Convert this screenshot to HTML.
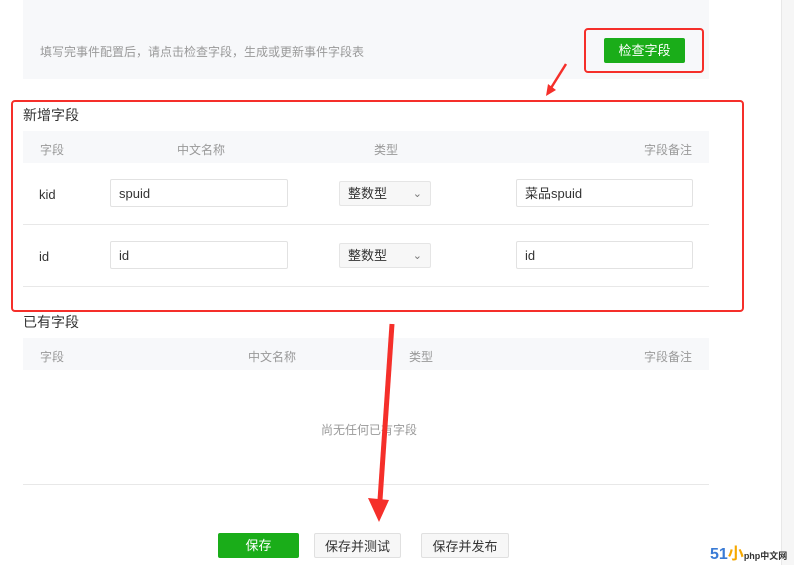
<!DOCTYPE html><html><head><meta charset="utf-8"><style>
body{margin:0;width:794px;height:565px;background:#fff;position:relative;overflow:hidden;font-family:"Liberation Sans","Noto Sans CJK SC",sans-serif;}
.a{position:absolute;white-space:nowrap}
.g{color:#999;font-size:12px}
.in{position:absolute;border:1px solid #e2e2e2;border-radius:2px;background:#fff;font-size:13px;color:#333;box-sizing:border-box;padding-left:8px;line-height:28px}
.sel{position:absolute;border:1px solid #e5e5e5;background:#f7f7f7;font-size:13px;color:#333;box-sizing:border-box;padding-left:8px;line-height:24px;border-radius:2px}
.btn{position:absolute;box-sizing:border-box;font-size:13px;text-align:center;line-height:25px;border-radius:2px}
</style></head><body>
<div class="a" style="left:781px;top:0;width:13px;height:565px;background:#f6f6f6;border-left:1px solid #e8e8e8"></div>
<div class="a" style="left:23px;top:0;width:686px;height:79px;background:#f7f8fa"></div>
<div class="a g" style="left:40px;top:43px">填写完事件配置后，请点击检查字段，生成或更新事件字段表</div>
<div class="btn" style="left:604px;top:38px;width:81px;height:25px;background:#1aad19;color:#fff">检查字段</div>
<div class="a" style="left:584px;top:28px;width:116px;height:41px;border:2px solid #f52f2a;border-radius:4px"></div>
<div class="a" style="left:11px;top:100px;width:729px;height:208px;border:2px solid #f52f2a;border-radius:4px"></div>
<div class="a" style="left:23px;top:105px;font-size:14px;color:#333">新增字段</div>
<div class="a" style="left:23px;top:131px;width:686px;height:32px;background:#f7f8fa"></div>
<div class="a g" style="left:40px;top:141px">字段</div><div class="a g" style="left:177px;top:141px">中文名称</div><div class="a g" style="left:374px;top:141px">类型</div><div class="a g" style="left:644px;top:141px">字段备注</div>
<div class="a" style="left:23px;top:224px;width:686px;height:1px;background:#e8e8e8"></div>
<div class="a" style="left:23px;top:286px;width:686px;height:1px;background:#e8e8e8"></div>
<div class="a" style="left:39px;top:187px;font-size:13px;color:#333">kid</div>
<div class="in" style="left:110px;top:179px;width:178px;height:28px">spuid</div>
<div class="sel" style="left:339px;top:181px;width:92px;height:25px">整数型<span style="position:absolute;right:8px;color:#777;font-size:11px">⌄</span></div>
<div class="in" style="left:516px;top:179px;width:177px;height:28px">菜品spuid</div>
<div class="a" style="left:39px;top:249px;font-size:13px;color:#333">id</div>
<div class="in" style="left:110px;top:241px;width:178px;height:28px">id</div>
<div class="sel" style="left:339px;top:243px;width:92px;height:25px">整数型<span style="position:absolute;right:8px;color:#777;font-size:11px">⌄</span></div>
<div class="in" style="left:516px;top:241px;width:177px;height:28px">id</div>
<div class="a" style="left:23px;top:312px;font-size:14px;color:#333">已有字段</div>
<div class="a" style="left:23px;top:338px;width:686px;height:32px;background:#f7f8fa"></div>
<div class="a g" style="left:40px;top:348px">字段</div><div class="a g" style="left:248px;top:348px">中文名称</div><div class="a g" style="left:409px;top:348px">类型</div><div class="a g" style="left:644px;top:348px">字段备注</div>
<div class="a g" style="left:321px;top:421px">尚无任何已有字段</div>
<div class="a" style="left:23px;top:484px;width:686px;height:1px;background:#e8e8e8"></div>
<div class="btn" style="left:218px;top:533px;width:81px;height:25px;background:#1aad19;color:#fff;line-height:26px">保存</div>
<div class="btn" style="left:314px;top:533px;width:87px;height:25px;background:#f7f7f7;border:1px solid #e0e0e0;color:#333">保存并测试</div>
<div class="btn" style="left:421px;top:533px;width:88px;height:25px;background:#f7f7f7;border:1px solid #e0e0e0;color:#333">保存并发布</div>
<div class="a" style="left:710px;top:540px;font-size:16px;font-weight:bold;color:#3a7bd5">51<span style="color:#f6a800">小</span><span style="font-size:9px;color:#333">php中文网</span></div>
<svg class="a" style="left:0;top:0" width="794" height="565">
<path d="M566 64 L551 88" stroke="#f52f2a" stroke-width="2.5" fill="none"/><path d="M546 96 L548 84 L556 90 Z" fill="#f52f2a"/>
<path d="M392 324 L380 500" stroke="#f52f2a" stroke-width="5" fill="none"/><path d="M368 498 L379 522 L389 500 Z" fill="#f52f2a"/>
</svg>
</body></html>
